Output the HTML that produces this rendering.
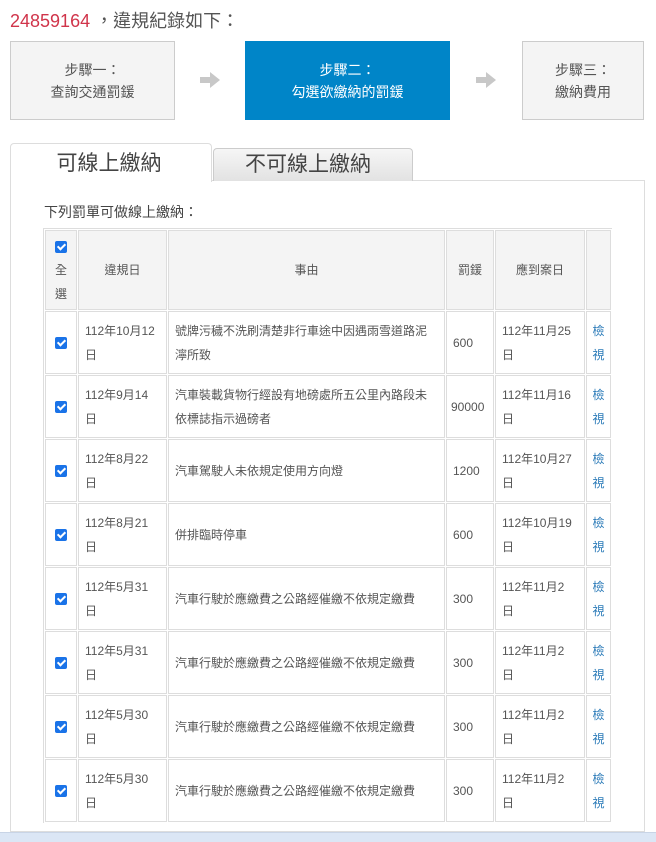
<!DOCTYPE html>
<html><head><meta charset="utf-8"><style>
*{box-sizing:border-box;margin:0;padding:0}
body{width:656px;height:842px;background:#fff;font-family:"Liberation Sans","Noto Sans CJK TC",sans-serif;color:#555;position:relative;overflow:hidden}
.abs{position:absolute}
.title{left:10px;top:7px;font-size:18px;color:#555}
.title span{color:#d0344a}
.step{top:41px;height:79px;border:1px solid #ccc;background:#f4f4f4;text-align:center;font-size:14px;line-height:22px;padding-top:17px;color:#555}
.step.on{background:#0085c8;border-color:#0085c8;color:#fff}
.arr{top:72px;width:20px;height:16px}
.tab{font-size:21px;text-align:center;color:#444}
.panel{left:10px;top:180px;width:635px;height:652px;border:1px solid #ddd;background:#fff}
table{position:absolute;left:43px;top:228px;border-collapse:separate;border-spacing:1px;table-layout:fixed;width:568px;border-top:1px solid #ddd;border-left:1px solid #ddd}
td,th{border:1px solid #ddd;font-size:12px;line-height:24px;color:#555;font-weight:normal;vertical-align:middle;padding:0 6px}
th{background:#f4f4f4;text-align:center;height:80px}
td{height:63px}
td.d{padding-right:12px}
td.c,th.c{text-align:center;padding:0}
.cb{display:inline-block;width:12px;height:12px;background:#1a73e8;border-radius:2px;position:relative;vertical-align:middle}
.cb:after{content:"";position:absolute;left:4px;top:1px;width:3px;height:6px;border:solid #fff;border-width:0 2px 2px 0;transform:rotate(45deg)}
a{color:#2a7ab8;text-decoration:none}
.bottom{left:0;top:832px;width:656px;height:10px;background:#dbe6f5;border-top:1px solid #c8d4e6}
</style></head><body>
<div class="abs title"><span>24859164</span> ，違規紀錄如下：</div>
<div class="abs step" style="left:10px;width:165px">步驟一：<br>查詢交通罰鍰</div>
<svg class="abs arr" style="left:200px" viewBox="0 0 20 16"><path d="M0 5h10V0l10 8-10 8v-5H0z" fill="#c8c8c8"/></svg>
<div class="abs step on" style="left:245px;width:205px">步驟二：<br>勾選欲繳納的罰鍰</div>
<svg class="abs arr" style="left:476px" viewBox="0 0 20 16"><path d="M0 5h10V0l10 8-10 8v-5H0z" fill="#c8c8c8"/></svg>
<div class="abs step" style="left:522px;width:122px">步驟三：<br>繳納費用</div>

<div class="abs panel"></div>
<div class="abs tab" style="left:10px;top:143px;width:202px;height:39px;background:#fff;border:1px solid #ddd;border-bottom:none;border-radius:4px 4px 0 0;line-height:40px;padding-right:4px">可線上繳納</div>
<div class="abs tab" style="left:213px;top:148px;width:200px;height:33px;background:linear-gradient(#f6f6f6,#e2e2e2);border:1px solid #ccc;border-bottom:none;border-radius:4px 4px 0 0;line-height:32px;padding-right:10px">不可線上繳納</div>
<div class="abs" style="left:44px;top:202px;font-size:14px;color:#444">下列罰單可做線上繳納：</div>

<table>
<colgroup><col style="width:32px"><col style="width:89px"><col style="width:277px"><col style="width:48px"><col style="width:90px"><col style="width:25px"></colgroup>
<tr><th class="c"><span class="cb"></span><br>全<br>選</th><th>違規日</th><th>事由</th><th class="c">罰鍰</th><th>應到案日</th><th></th></tr>
<tr><td class="c"><span class="cb"></span></td><td>112年10月12日</td><td>號牌污穢不洗刷清楚非行車途中因遇雨雪道路泥濘所致</td><td>600</td><td class="d">112年11月25日</td><td class="c"><a>檢<br>視</a></td></tr>
<tr><td class="c"><span class="cb"></span></td><td>112年9月14日</td><td>汽車裝載貨物行經設有地磅處所五公里內路段未依標誌指示過磅者</td><td style="padding:0 4px">90000</td><td class="d">112年11月16日</td><td class="c"><a>檢<br>視</a></td></tr>
<tr><td class="c"><span class="cb"></span></td><td>112年8月22日</td><td>汽車駕駛人未依規定使用方向燈</td><td>1200</td><td class="d">112年10月27日</td><td class="c"><a>檢<br>視</a></td></tr>
<tr><td class="c"><span class="cb"></span></td><td>112年8月21日</td><td>併排臨時停車</td><td>600</td><td class="d">112年10月19日</td><td class="c"><a>檢<br>視</a></td></tr>
<tr><td class="c"><span class="cb"></span></td><td>112年5月31日</td><td>汽車行駛於應繳費之公路經催繳不依規定繳費</td><td>300</td><td class="d">112年11月2<br>日</td><td class="c"><a>檢<br>視</a></td></tr>
<tr><td class="c"><span class="cb"></span></td><td>112年5月31日</td><td>汽車行駛於應繳費之公路經催繳不依規定繳費</td><td>300</td><td class="d">112年11月2<br>日</td><td class="c"><a>檢<br>視</a></td></tr>
<tr><td class="c"><span class="cb"></span></td><td>112年5月30日</td><td>汽車行駛於應繳費之公路經催繳不依規定繳費</td><td>300</td><td class="d">112年11月2<br>日</td><td class="c"><a>檢<br>視</a></td></tr>
<tr><td class="c"><span class="cb"></span></td><td>112年5月30日</td><td>汽車行駛於應繳費之公路經催繳不依規定繳費</td><td>300</td><td class="d">112年11月2<br>日</td><td class="c"><a>檢<br>視</a></td></tr>
</table>
<div class="abs bottom"></div>
</body></html>
